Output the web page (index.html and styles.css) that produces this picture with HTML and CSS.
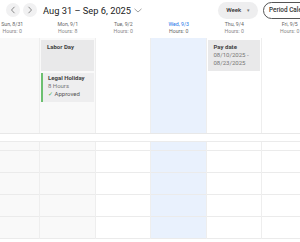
FILE: index.html
```html
<!DOCTYPE HTML>
<html>
<head>
    <title>Week view</title>
    <meta charset="UTF-8">
    <link rel="stylesheet" href="styles.css">
</head>
<body>
    <div class="toolbar">
        <button class="nav-btn" aria-label="Previous week">
            <svg width="6" height="8" viewBox="0 0 6 8"><path d="M4.5 0.8 L1.5 4 L4.5 7.2" fill="none" stroke="#888" stroke-width="1"/></svg>
        </button>
        <button class="nav-btn" aria-label="Next week">
            <svg width="6" height="8" viewBox="0 0 6 8"><path d="M1.5 0.8 L4.5 4 L1.5 7.2" fill="none" stroke="#888" stroke-width="1"/></svg>
        </button>
        <div class="range">
            Aug 31 – Sep 6, 2025
            <svg width="8" height="5" viewBox="0 0 8 5"><path d="M0.5 0.8 L4 4 L7.5 0.8" fill="none" stroke="#999" stroke-width="0.9"/></svg>
        </div>
        <button class="week-btn">Week <span class="caret">▾</span></button>
        <button class="period-btn">Period Calendar</button>
    </div>

    <div class="week">
        <div class="days">
            <div class="day"><span>Sun, 8/31</span><span class="hours">Hours: 0</span></div>
            <div class="day"><span>Mon, 9/1</span><span class="hours">Hours: 8</span></div>
            <div class="day"><span>Tue, 9/2</span><span class="hours">Hours: 0</span></div>
            <div class="day today"><span>Wed, 9/3</span><span class="hours">Hours: 0</span></div>
            <div class="day"><span>Thu, 9/4</span><span class="hours">Hours: 0</span></div>
            <div class="day"><span>Fri, 9/5</span><span class="hours">Hours: 0</span></div>
            <div class="day"><span>Sat, 9/6</span><span class="hours">Hours: 0</span></div>
        </div>

        <div class="allday">
            <div class="col off"></div>
            <div class="col off">
                <div class="card holiday">
                    <div class="card-title">Labor Day</div>
                </div>
                <div class="card leave">
                    <div class="card-title">Legal Holiday</div>
                    <div>8 Hours</div>
                    <div class="approved"><span class="check">✓</span> Approved</div>
                </div>
            </div>
            <div class="col"></div>
            <div class="col today"></div>
            <div class="col">
                <div class="card">
                    <div class="card-title">Pay date</div>
                    <div>08/10/2025 -</div>
                    <div>08/23/2025</div>
                </div>
            </div>
            <div class="col"></div>
            <div class="col off"></div>
        </div>

        <div class="timed">
            <div class="col off"><div class="slot first"></div><div class="slot"></div><div class="slot"></div><div class="slot"></div><div class="slot"></div></div>
            <div class="col off"><div class="slot first"></div><div class="slot"></div><div class="slot"></div><div class="slot"></div><div class="slot"></div></div>
            <div class="col"><div class="slot first"></div><div class="slot"></div><div class="slot"></div><div class="slot"></div><div class="slot"></div></div>
            <div class="col today"><div class="slot first"></div><div class="slot"></div><div class="slot"></div><div class="slot"></div><div class="slot"></div></div>
            <div class="col"><div class="slot first"></div><div class="slot"></div><div class="slot"></div><div class="slot"></div><div class="slot"></div></div>
            <div class="col"><div class="slot first"></div><div class="slot"></div><div class="slot"></div><div class="slot"></div><div class="slot"></div></div>
            <div class="col off"><div class="slot first"></div><div class="slot"></div><div class="slot"></div><div class="slot"></div><div class="slot"></div></div>
        </div>
    </div>
</body>
</html>
```

FILE: styles.css
```css
html, body{
    margin: 0;
    overflow: hidden;
    background: #fff;
    font-family: Roboto, "Liberation Sans", sans-serif;
    color: #333;
}

button{
    font-family: inherit;
    cursor: pointer;
}

.toolbar{
    display: flex;
    align-items: center;
    width: 372px;
    height: 20px;
    padding: 0 9px 0 6px;
    box-sizing: border-box;
}

.nav-btn{
    display: flex;
    align-items: center;
    justify-content: center;
    width: 14px;
    height: 14px;
    margin-right: 2.5px;
    padding: 0;
    border: none;
    border-radius: 50%;
    background: #f1f1f2;
}

.range{
    display: flex;
    align-items: center;
    gap: 3px;
    margin-left: 4px;
    font-size: 9.3px;
    color: #222;
}

.week-btn{
    margin-left: auto;
    width: 40px;
    height: 17px;
    padding: 0;
    border: none;
    border-radius: 9px;
    background: #eeeeef;
    font-size: 6.2px;
    font-weight: 500;
    color: #333;
}

.week-btn .caret{
    margin-left: 4px;
    font-size: 5px;
    color: #777;
}

.period-btn{
    width: 100px;
    height: 17px;
    margin-left: 5px;
    padding: 0 0 0 5px;
    border: 1px solid #555;
    border-radius: 9px;
    background: #fff;
    text-align: left;
    font-size: 6.4px;
    font-weight: 500;
    color: #333;
}

.week{
    margin-left: -15.5px;
}

.days,
.allday,
.timed{
    display: grid;
    grid-template-columns: repeat(7, 55.5px);
}

.days{
    height: 18px;
}

.day{
    display: flex;
    flex-direction: column;
    align-items: center;
    padding-top: 1px;
    font-size: 5.2px;
    line-height: 6.6px;
    color: #666;
}

.day .hours{
    color: #888;
}

.day.today span:first-child{
    color: #1a73e8;
}

.day.today .hours{
    color: #666;
}

.col{
    border-right: 1px solid #eeeeee;
}

.col.off{
    background: #f9f9f9;
}

.col.today{
    background: #e9f1fd;
}

.allday{
    height: 95px;
    border-bottom: 1px solid #e8e8e8;
}

.allday .col{
    padding: 2px 1px 0;
}

.card{
    padding: 3px 6px 4px;
    background: #e9e9ea;
    font-size: 6px;
    line-height: 8px;
    color: #777;
}

.card + .card{
    margin-top: 2px;
}

.card-title{
    font-weight: 700;
    color: #444;
}

.card.holiday{
    height: 24px;
}

.card.leave{
    padding: 1px 6px 4px 5px;
    border-left: 2px solid #6cc070;
    background: #eeeeef;
}

.approved{
    color: #555;
}

.check{
    color: #4caf50;
}

.timed{
    margin-top: 7px;
    border-top: 1px solid #ebebeb;
}

.slot{
    height: 21px;
    border-bottom: 1px solid #ebebeb;
}

.slot.first{
    height: 8px;
}
```
